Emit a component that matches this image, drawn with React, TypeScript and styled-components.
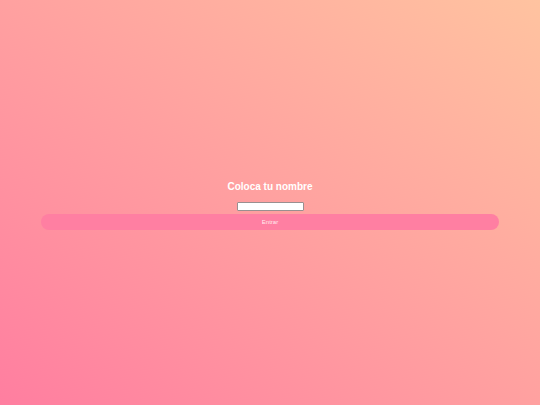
import styled, { createGlobalStyle } from 'styled-components';

const GlobalStyle = createGlobalStyle`
    html,
    body {
        margin: 0;
        padding: 0;
        height: 100%;
    }

    body {
        font-family: 'Liberation Sans', Arial, sans-serif;
        background: linear-gradient(to top right, #ff7ea0, #ffc3a0);
    }
`;

const Page = styled.main`
    display: flex;
    flex-direction: column;
    align-items: center;
    justify-content: center;
    min-height: 100vh;
    padding-top: 6px;
    box-sizing: border-box;
`;

const Title = styled.h2`
    margin: 0;
    font-size: 10px;
    line-height: 12px;
    font-weight: 700;
    color: #ffffff;
`;

const NameInput = styled.input`
    box-sizing: border-box;
    width: 67px;
    height: 9px;
    margin-top: 9px;
    padding: 0;
    border: 1px solid #9a8f90;
    border-radius: 1px;
    background: #ffffff;
    font-size: 6px;
`;

const SubmitButton = styled.button`
    align-self: stretch;
    margin: 3px 41px 0;
    height: 16px;
    padding: 0;
    border: none;
    border-radius: 8px;
    background: #ff7fa2;
    color: rgba(255, 255, 255, 0.85);
    font-family: 'Liberation Sans', Arial, sans-serif;
    font-size: 6px;
    cursor: pointer;
`;

export default function App() {
    return (
        <>
            <GlobalStyle />
            <Page>
                <Title>Coloca tu nombre</Title>
                <NameInput type="text" />
                <SubmitButton type="button">Entrar</SubmitButton>
            </Page>
        </>
    );
}
